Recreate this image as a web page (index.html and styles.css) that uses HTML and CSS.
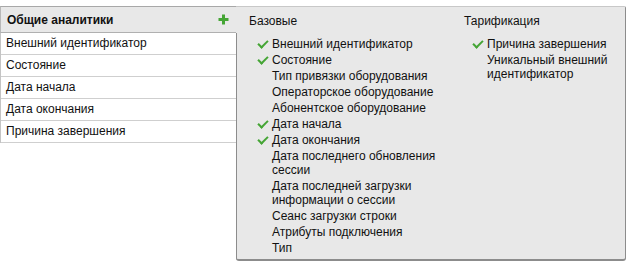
FILE: index.html
```html
<!DOCTYPE html>
<html lang="ru">
<head>
<meta charset="UTF-8">
<title>Аналитики</title>
<link rel="stylesheet" href="styles.css">
</head>
<body>
<div class="analytics">
    <div class="common">
        <div class="common-head">
            <span>Общие аналитики</span>
            <svg class="plus" width="11" height="11" viewBox="0 0 11 11"><path d="M5.5 0.5v10M0.5 5.5h10" stroke="#45a535" stroke-width="3"/></svg>
        </div>
        <ul class="common-list">
            <li>Внешний идентификатор</li>
            <li>Состояние</li>
            <li>Дата начала</li>
            <li>Дата окончания</li>
            <li>Причина завершения</li>
        </ul>
    </div>
    <div class="catalog">
        <div class="group group-base">
            <h3>Базовые</h3>
            <ul>
                <li class="on">Внешний идентификатор</li>
                <li class="on">Состояние</li>
                <li>Тип привязки оборудования</li>
                <li>Операторское оборудование</li>
                <li>Абонентское оборудование</li>
                <li class="on">Дата начала</li>
                <li class="on">Дата окончания</li>
                <li>Дата последнего обновления сессии</li>
                <li>Дата последней загрузки информации о сессии</li>
                <li>Сеанс загрузки строки</li>
                <li>Атрибуты подключения</li>
                <li>Тип</li>
            </ul>
        </div>
        <div class="group group-tariff">
            <h3>Тарификация</h3>
            <ul>
                <li class="on">Причина завершения</li>
                <li>Уникальный внешний идентификатор</li>
            </ul>
        </div>
    </div>
</div>
</body>
</html>
```

FILE: styles.css
```css
body {
    margin: 0;
    padding-top: 6px;
    font-family: "Liberation Sans", Arial, sans-serif;
    font-size: 12px;
    color: #111;
    background: #fff;
}
ul {
    list-style: none;
    margin: 0;
    padding: 0;
}
.analytics {
    display: flex;
    width: 626px;
    height: 255px;
}
.common {
    width: 236px;
    flex: none;
}
.common-head {
    display: flex;
    justify-content: space-between;
    align-items: center;
    height: 25px;
    padding: 0 7px 0 6px;
    background: #e8e8e8;
    border-top: 1px solid #a8a8a8;
    border-left: 1px solid #b8b8b8;
    border-bottom: 1px solid #b0b0b0;
    font-weight: bold;
}
.common-list {
    background: #fff;
    border-left: 1px solid #c4c4c4;
}
.common-list li {
    height: 21px;
    line-height: 21px;
    padding-left: 5px;
    border-bottom: 1px solid #cfcfcf;
}
.catalog {
    flex: 1;
    display: flex;
    padding: 7px 0 0 13px;
    background: #e8e8e8 linear-gradient(#8c8c8c, #8c8c8c) no-repeat 0 26px / 1px 100%;
    border-top: 1px solid #c8c8c8;
    border-right: 1px solid #8c8c8c;
    border-bottom: 2px solid #8c8c8c;
    border-radius: 0 2px 3px 3px;
}
.group h3 {
    margin: 0 0 8px;
    font-size: 12px;
    font-weight: normal;
    line-height: 15px;
}
.group-base {
    width: 215px;
}
.group-base ul {
    width: 200px;
}
.group-tariff {
    flex: 1;
}
.group li {
    position: relative;
    padding-left: 23px;
    line-height: 14px;
    margin-bottom: 2px;
}
.group li.on::before {
    content: "";
    position: absolute;
    left: 9px;
    top: 3px;
    width: 8px;
    height: 4px;
    border-left: 2.5px solid #45a535;
    border-bottom: 2.5px solid #45a535;
    transform: rotate(-45deg);
}
```
